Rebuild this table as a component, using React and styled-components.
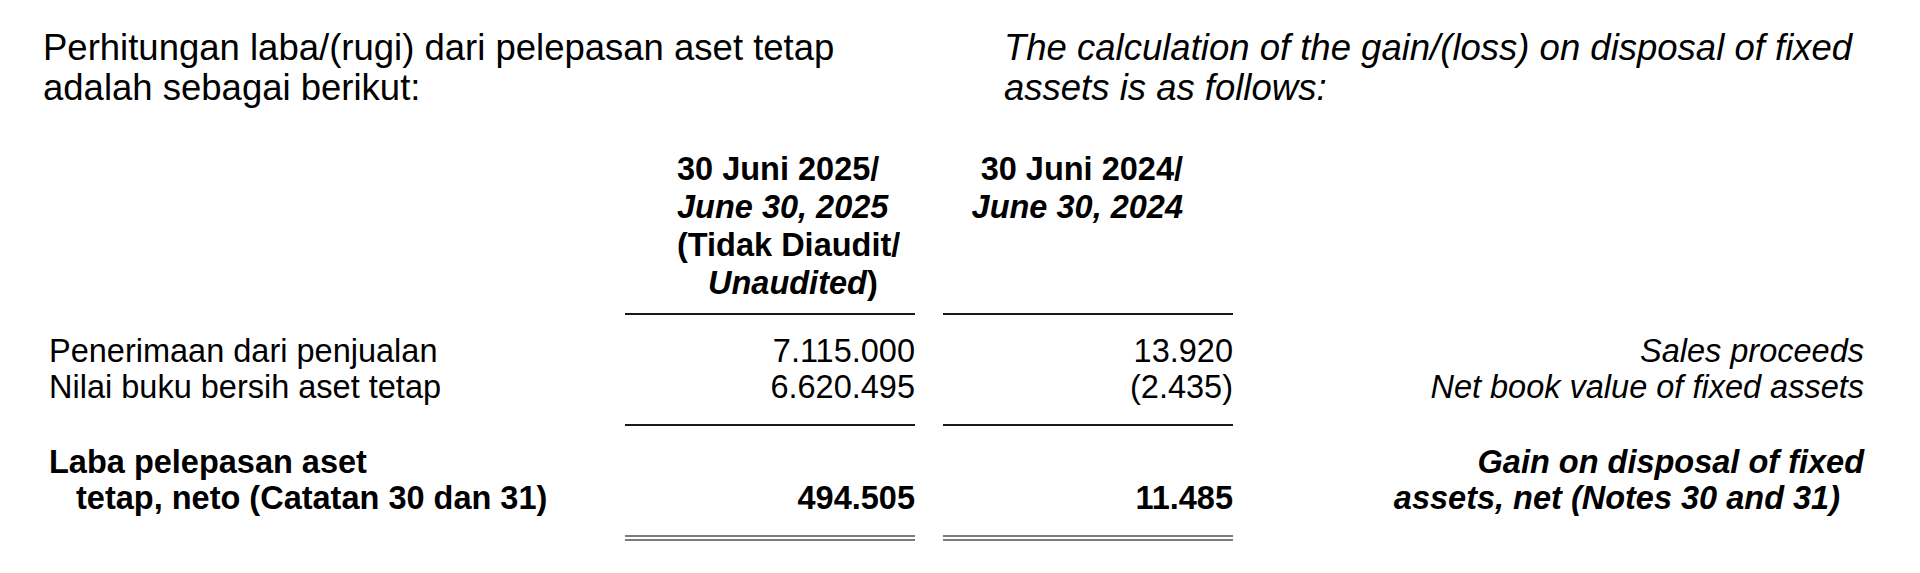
import React from "react";
import styled, { createGlobalStyle } from "styled-components";

const GlobalStyle = createGlobalStyle`
  body {
    margin: 0;
    background: #fff;
    color: #000;
    font-family: "Liberation Sans", Arial, Helvetica, sans-serif;
  }
`;

const rows = [
  {
    id: "proceeds",
    label: "Penerimaan dari penjualan",
    current: "7.115.000",
    prior: "13.920",
    english: "Sales proceeds",
  },
  {
    id: "nbv",
    label: "Nilai buku bersih aset tetap",
    current: "6.620.495",
    prior: "(2.435)",
    english: "Net book value of fixed assets",
    rule: "single",
  },
];

function App() {
  return (
    <>
      <GlobalStyle />
      <Page>
        <Intro>
          <IntroText>
            Perhitungan laba/(rugi) dari pelepasan aset tetap
            <br />
            adalah sebagai berikut:
          </IntroText>
          <IntroText $italic>
            The calculation of the gain/(loss) on disposal of fixed
            <br />
            assets is as follows:
          </IntroText>
        </Intro>

        <HeaderRow>
          <span />
          <ColHead $pl={52}>
            30 Juni 2025/
            <br />
            <em>June 30, 2025</em>
            <br />
            (Tidak Diaudit/
            <br />
            <Indent $size={31}>
              <em>Unaudited</em>)
            </Indent>
          </ColHead>
          <ColHead $align="right" $pr={50}>
            30 Juni 2024/
            <br />
            <em>June 30, 2024</em>
          </ColHead>
          <span />
        </HeaderRow>

        <Body>
          {rows.map((r) => (
            <Row key={r.id}>
              <Label>{r.label}</Label>
              <Amount $rule={r.rule}>{r.current}</Amount>
              <Amount $rule={r.rule}>{r.prior}</Amount>
              <English>{r.english}</English>
            </Row>
          ))}
        </Body>

        <TotalRow>
          <Label $bold>
            Laba pelepasan aset
            <Indent $size={27}>tetap, neto (Catatan 30 dan 31)</Indent>
          </Label>
          <Amount $bold $rule="double" $lines={2}>
            494.505
          </Amount>
          <Amount $bold $rule="double" $lines={2}>
            11.485
          </Amount>
          <English $bold>
            Gain on disposal of fixed
            <EnglishLine $pr={24}>assets, net (Notes 30 and 31)</EnglishLine>
          </English>
        </TotalRow>
      </Page>
    </>
  );
}

export default App;

const Page = styled.div`
  width: 1920px;
  height: 573px;
  box-sizing: border-box;
  padding: 28px 43px 0;
  overflow: hidden;
`;

const Intro = styled.div`
  display: grid;
  grid-template-columns: 961px 1fr;
`;

const IntroText = styled.p`
  margin: 0;
  font-size: 36.5px;
  line-height: 40px;
  font-style: ${(p) => (p.$italic ? "italic" : "normal")};
`;

const Grid = styled.div`
  display: grid;
  grid-template-columns: 554px 290px 290px 603px;
  column-gap: 28px;
  font-size: 32.5px;
  line-height: 36px;
`;

const HeaderRow = styled(Grid)`
  margin-top: 42px;
`;

const ColHead = styled.div`
  font-weight: bold;
  line-height: 38px;
  text-align: ${(p) => p.$align || "left"};
  padding-left: ${(p) => p.$pl || 0}px;
  padding-right: ${(p) => p.$pr || 0}px;
  padding-bottom: 11px;
  border-bottom: 2px solid #1a1a1a;

  em {
    font-style: italic;
  }
`;

const Indent = styled.span`
  display: block;
  padding-left: ${(p) => p.$size}px;
`;

const Body = styled.div`
  margin-top: 18px;
`;

const Row = styled(Grid)``;

const TotalRow = styled(Grid)`
  margin-top: 18px;
`;

const Label = styled.div`
  padding-left: 6px;
  font-weight: ${(p) => (p.$bold ? "bold" : "normal")};
  white-space: nowrap;
`;

const Amount = styled.div`
  display: flex;
  flex-direction: column;
  justify-content: flex-end;
  min-height: ${(p) => (p.$lines || 1) * 36}px;
  text-align: right;
  font-weight: ${(p) => (p.$bold ? "bold" : "normal")};
  padding-bottom: ${(p) => (p.$rule ? 19 : 0)}px;
  border-bottom: ${(p) =>
    p.$rule === "double"
      ? "6px double #7c7c7c"
      : p.$rule === "single"
      ? "2px solid #1a1a1a"
      : "none"};
`;

const English = styled.div`
  text-align: right;
  font-style: italic;
  font-weight: ${(p) => (p.$bold ? "bold" : "normal")};
  white-space: nowrap;
`;

const EnglishLine = styled.span`
  display: block;
  padding-right: ${(p) => p.$pr || 0}px;
`;
